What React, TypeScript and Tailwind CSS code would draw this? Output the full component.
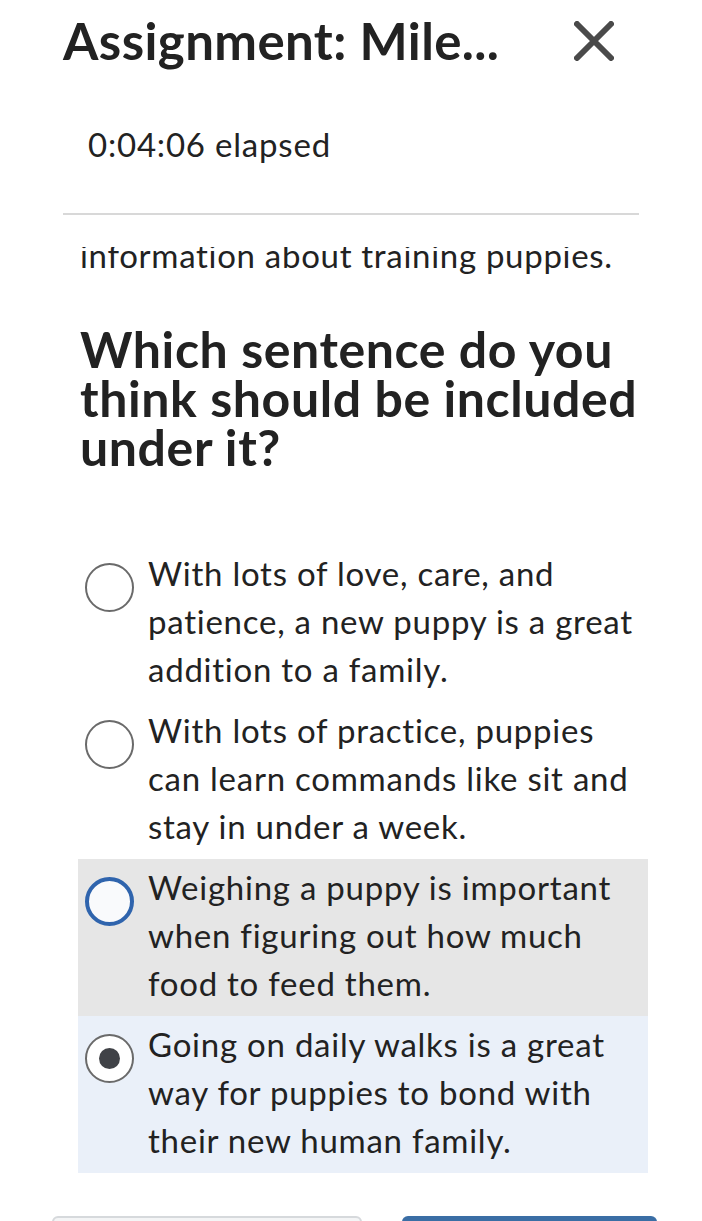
import React from 'react';

type Option = {
    text: string;
    state?: 'hover' | 'selected';
};

const options: Option[] = [
    { text: 'With lots of love, care, and patience, a new puppy is a great addition to a family.' },
    { text: 'With lots of practice, puppies can learn commands like sit and stay in under a week.' },
    { text: 'Weighing a puppy is important when figuring out how much food to feed them.', state: 'hover' },
    { text: 'Going on daily walks is a great way for puppies to bond with their new human family.', state: 'selected' },
];

export default function App() {
    return (
        <div className="h-[1221px] w-[702px] overflow-hidden bg-white font-['Lato',sans-serif] text-[#222]">
            <header className="flex items-center justify-between pl-[63px] pr-[88px] pt-[11px]">
                <h1 className="text-[51px] font-bold leading-[60px] tracking-[0.4px]">Assignment: Mile...</h1>
                <CloseIcon />
            </header>

            <div className="pl-[88px] pt-[53px] text-[33px] leading-[40px] tracking-[0.8px]">0:04:06 elapsed</div>

            <div className="mx-[63px] mt-[49px] h-[2px] bg-[#d8d8d8]" />

            <main className="pl-[78px] pr-[54px]">
                {/* previous paragraph, scrolled mostly out of view */}
                <div className="mt-[32px] h-[32px] overflow-hidden">
                    <p className="-mt-[16px] pl-[2px] text-[33px] leading-[48px] tracking-[0.7px]">
                        information about training puppies.
                    </p>
                </div>

                <h2 className="pl-[2px] pt-[46px] text-[50px] font-bold leading-[49px] tracking-[0.6px]">
                    Which sentence do you think should be included under it?
                </h2>

                <div className="mt-[73px] flex flex-col">
                    {options.map((o) => (
                        <OptionRow key={o.text} option={o} />
                    ))}
                </div>
            </main>

            <div className="mt-[43px] flex gap-[40px] pl-[52px] pr-[45px]">
                <div className="h-[10px] w-[310px] rounded-t-[6px] border-2 border-[#d6d9dc] bg-[#f4f5f6]" />
                <div className="h-[10px] flex-1 rounded-t-[6px] bg-[#3a6ea5]" />
            </div>
        </div>
    );
}

function OptionRow(props: { option: Option }) {
    const { state } = props.option;
    const bg = state === 'hover' ? 'bg-[#e6e6e6]' : state === 'selected' ? 'bg-[#eaf0f9]' : 'bg-white';

    return (
        <div className={`flex gap-[14px] pb-[9px] pl-[7px] pr-[4px] pt-[4px] ${bg}`}>
            <div className="shrink-0 pt-[14px]">
                <Radio state={state} />
            </div>
            <p className="text-[33px] leading-[48px] tracking-[0.75px]">{props.option.text}</p>
        </div>
    );
}

function Radio(props: { state?: 'hover' | 'selected' }) {
    if (props.state === 'hover') {
        return <div className="h-[49px] w-[49px] rounded-full border-[4px] border-[#2f64ad] bg-[#f9fafc]" />;
    }
    return (
        <div className="flex h-[49px] w-[49px] items-center justify-center rounded-full border-2 border-[#6a6a6a] bg-white">
            {props.state === 'selected' && <div className="h-[21px] w-[21px] rounded-full bg-[#404247]" />}
        </div>
    );
}

function CloseIcon() {
    return (
        <svg width="40" height="40" viewBox="0 0 40 40" className="shrink-0">
            <path d="M3 3 L37 37 M37 3 L3 37" stroke="#4a4a4a" strokeWidth="6" strokeLinecap="round" />
        </svg>
    );
}
